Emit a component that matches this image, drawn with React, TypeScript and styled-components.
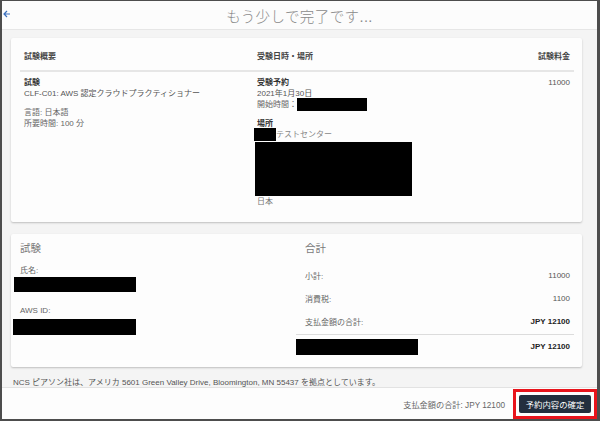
import React from 'react'
import styled, { createGlobalStyle } from 'styled-components'

const GlobalStyle = createGlobalStyle`
  html, body {
    margin: 0;
    padding: 0;
    background: #fff;
  }
  body {
    font-family: "Liberation Sans", "Noto Sans CJK JP", sans-serif;
  }
`

const Frame = styled.div`
  width: 600px;
  height: 421px;
  box-sizing: border-box;
  border-style: solid;
  border-color: #4d4d4d;
  border-width: 1px 3px 2px 2px;
  display: flex;
  flex-direction: column;
  overflow: hidden;
  background: #f4f4f4;
  font-family: "Liberation Sans", "Noto Sans CJK JP", sans-serif;
`

const Header = styled.header`
  flex: none;
  height: 28px;
  display: grid;
  grid-template-columns: 24px 1fr 24px;
  align-items: center;
  background: #fcfcfc;
  border-bottom: 1px solid #e6e6e6;
`

const BackButton = styled.button`
  display: flex;
  align-items: center;
  padding: 0 0 3px 1px;
  margin: 0;
  border: none;
  background: none;
  color: #3a6fbd;
  height: 28px;
  cursor: pointer;
`

const Title = styled.h1`
  margin: 0;
  text-align: center;
  font-size: 14.5px;
  font-weight: 300;
  letter-spacing: 0.4px;
  color: #8a8a8a;
`

const Main = styled.main`
  flex: 1;
  min-height: 0;
  overflow: hidden;
  padding: 8px 15px 0 9px;
  display: flex;
  flex-direction: column;
  gap: 12px;

  & > * {
    flex-shrink: 0;
  }
`

const Card = styled.section`
  background: #fdfdfd;
  border-radius: 2px;
  box-shadow: 0 1px 2px rgba(0, 0, 0, 0.22);
`

const SummaryCard = styled(Card)`
  height: 184px;
  box-sizing: border-box;
  padding: 12px 8px 0 9px;
`

const SummaryRow = styled.div<{ $head?: boolean }>`
  display: grid;
  grid-template-columns: 233px 1fr auto;
  border-bottom: ${p => (p.$head ? '2px solid #e6e6e6' : 'none')};
`

const Cell = styled.div<{ $right?: boolean; $head?: boolean }>`
  padding: ${p => (p.$head ? '0 4px 6px' : '5px 4px 0')};
  text-align: ${p => (p.$right ? 'right' : 'left')};
  font-size: 8px;
  line-height: ${p => (p.$head ? '14px' : '11px')};
  color: ${p => (p.$head ? '#444' : '#555')};
  font-weight: ${p => (p.$head ? 600 : 400)};
`

const Label = styled.div`
  font-weight: 700;
  color: #333;
  line-height: 11px;
  font-size: 8px;
`

const Line = styled.div<{ $tone?: string }>`
  display: flex;
  align-items: center;
  height: 11px;
  font-size: 8px;
  color: ${p => p.$tone || '#555'};
  white-space: nowrap;
`

const Block = styled.div<{ $gap?: number }>`
  margin-top: ${p => p.$gap || 0}px;
`

const Redact = styled.span<{ $w: number; $h: number; $ml?: number }>`
  display: inline-block;
  flex: none;
  width: ${p => p.$w}px;
  height: ${p => p.$h}px;
  margin-left: ${p => p.$ml || 0}px;
  background: #000;
`

const RedactBlock = styled.div<{ $w: number; $h: number; $ml?: number; $mt?: number }>`
  width: ${p => p.$w}px;
  height: ${p => p.$h}px;
  margin-left: ${p => p.$ml || 0}px;
  margin-top: ${p => p.$mt || 0}px;
  background: #000;
`

const TotalsCard = styled(Card)`
  height: 133px;
  display: grid;
  grid-template-columns: 285px 1fr;
`

const Column = styled.div<{ $right?: boolean }>`
  padding: ${p => (p.$right ? '7px 8px 0 0' : '7px 0 0 9px')};
`

const CardHeading = styled.h2<{ $indent?: number }>`
  margin: 0 0 0 ${p => p.$indent || 0}px;
  font-size: 10.5px;
  line-height: 14px;
  font-weight: 400;
  color: #7a7a7a;
`

const FieldLabel = styled.div<{ $mt: number }>`
  margin-top: ${p => p.$mt}px;
  font-size: 8px;
  line-height: 11px;
  color: #666;
`

const TotalsList = styled.div`
  margin-top: 9px;
`

const TotalRow = styled.div<{ $divider?: boolean }>`
  display: flex;
  align-items: center;
  justify-content: space-between;
  height: 23px;
  padding: 0 4px 0 9px;
  font-size: 8px;
  color: #666;
  border-top: ${p => (p.$divider ? '1px solid #dcdcdc' : 'none')};
  margin-top: ${p => (p.$divider ? '1px' : '0')};
`

const Amount = styled.span<{ $bold?: boolean }>`
  color: ${p => (p.$bold ? '#222' : '#555')};
  font-weight: ${p => (p.$bold ? 700 : 400)};
`

const Note = styled.p`
  margin: -2px 0 0 2px;
  font-size: 8px;
  line-height: 11px;
  color: #555;
  white-space: nowrap;
`

const Footer = styled.footer`
  flex: none;
  height: 31px;
  display: flex;
  align-items: flex-end;
  justify-content: flex-end;
  gap: 8px;
  background: #fdfdfd;
  border-top: 1px solid #e2e2e2;
`

const FooterTotal = styled.span`
  align-self: center;
  font-size: 8.2px;
  color: #666;
  margin-top: 1px;
`

const Highlight = styled.div`
  width: 84px;
  height: 30px;
  box-sizing: border-box;
  border: 3px solid #e8141c;
  padding: 3px;
`

const ConfirmButton = styled.button`
  display: block;
  width: 72px;
  height: 18px;
  padding: 0;
  border: none;
  border-radius: 2px;
  background: #232f3e;
  color: #fff;
  font-family: "Liberation Sans", "Noto Sans CJK JP", sans-serif;
  font-size: 8.4px;
  cursor: pointer;
`

export default function App() {
  return (
    <>
      <GlobalStyle />
      <Frame>
        <Header>
          <BackButton aria-label="戻る">
            <svg width="8" height="8" viewBox="0 0 8 8" fill="none" stroke="currentColor" strokeWidth="1.2">
              <path d="M7 4H1.2M4 1 1 4l3 3" />
            </svg>
          </BackButton>
          <Title>もう少しで完了です...</Title>
          <span />
        </Header>

        <Main>
          <SummaryCard>
            <SummaryRow $head>
              <Cell $head>試験概要</Cell>
              <Cell $head>受験日時・場所</Cell>
              <Cell $head $right>試験料金</Cell>
            </SummaryRow>
            <SummaryRow>
              <Cell>
                <Label>試験</Label>
                <Line>CLF-C01: AWS 認定クラウドプラクティショナー</Line>
                <Block $gap={8}>
                  <Line $tone="#666">言語: 日本語</Line>
                  <Line $tone="#666">所要時間: 100 分</Line>
                </Block>
              </Cell>
              <Cell>
                <Label>受験予約</Label>
                <Line>2021年1月30日</Line>
                <Line $tone="#666">
                  開始時間：<Redact $w={70} $h={13} $ml={0} />
                </Line>
                <Block $gap={8}>
                  <Label>場所</Label>
                  <Line $tone="#888">
                    <Redact $w={22} $h={13} $ml={-3} />
                    テストセンター
                  </Line>
                  <RedactBlock $w={157} $h={54} $ml={-2} $mt={2} />
                  <Line $tone="#777">日本</Line>
                </Block>
              </Cell>
              <Cell $right>11000</Cell>
            </SummaryRow>
          </SummaryCard>

          <TotalsCard>
            <Column>
              <CardHeading>試験</CardHeading>
              <FieldLabel $mt={10}>氏名:</FieldLabel>
              <RedactBlock $w={122} $h={15} $ml={-6} $mt={1} />
              <FieldLabel $mt={13}>AWS ID:</FieldLabel>
              <RedactBlock $w={123} $h={16} $ml={-7} $mt={3} />
            </Column>
            <Column $right>
              <CardHeading $indent={9}>合計</CardHeading>
              <TotalsList>
                <TotalRow>
                  <span>小計:</span>
                  <Amount>11000</Amount>
                </TotalRow>
                <TotalRow>
                  <span>消費税:</span>
                  <Amount>1100</Amount>
                </TotalRow>
                <TotalRow>
                  <span>支払金額の合計:</span>
                  <Amount $bold>JPY 12100</Amount>
                </TotalRow>
                <TotalRow $divider>
                  <Redact $w={122} $h={16} $ml={-9} />
                  <Amount $bold>JPY 12100</Amount>
                </TotalRow>
              </TotalsList>
            </Column>
          </TotalsCard>

          <Note>
            NCS ピアソン社は、アメリカ 5601 Green Valley Drive, Bloomington, MN 55437 を拠点としています。
          </Note>
        </Main>

        <Footer>
          <FooterTotal>支払金額の合計: JPY 12100</FooterTotal>
          <Highlight>
            <ConfirmButton>予約内容の確定</ConfirmButton>
          </Highlight>
        </Footer>
      </Frame>
    </>
  )
}
